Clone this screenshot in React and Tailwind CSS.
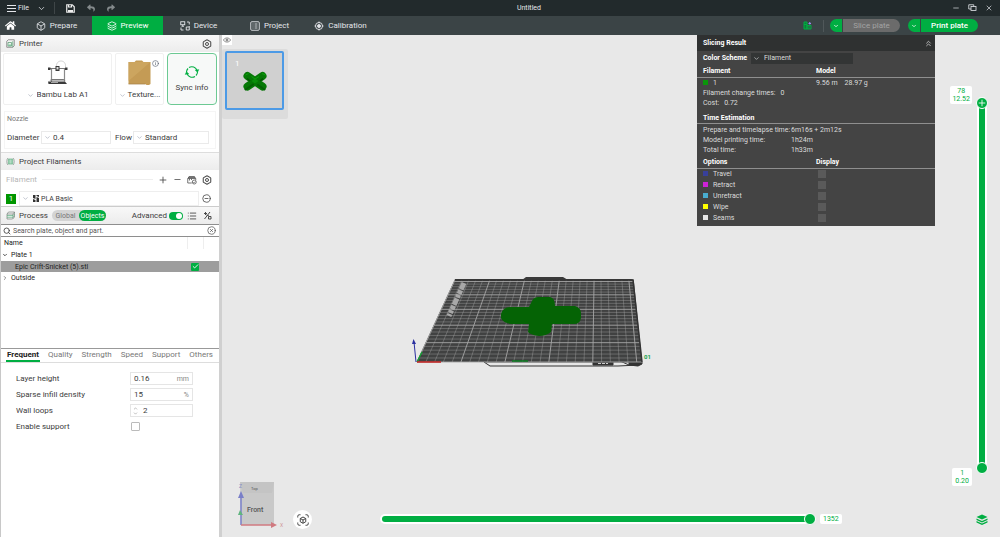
import React, { useState } from "react";
import {
  Box,
  Check,
  ChevronDown,
  ChevronRight,
  ChevronsUp,
  ChevronUp,
  CircleMinus,
  CircleX,
  Hexagon,
  Info,
  Layers,
  List,
  Minus,
  Plus,
  Search,
  X,
} from "lucide-react";
import { FaHome, FaReply, FaShare } from "react-icons/fa";

const tabs = [
  { id: "prepare", label: "Prepare", icon: <Box size={10} strokeWidth={2} /> },
  { id: "preview", label: "Preview", icon: <Layers size={10} strokeWidth={2} /> },
  { id: "device", label: "Device", icon: <DeviceIcon /> },
  { id: "project", label: "Project", icon: <ProjectIcon /> },
  { id: "calibration", label: "Calibration", icon: <TargetIcon /> },
];

const paramTabs = ["Frequent", "Quality", "Strength", "Speed", "Support", "Others"];

const lineTypes = [
  { label: "Travel", color: "bg-[#38409a]" },
  { label: "Retract", color: "bg-[#cd22d6]" },
  { label: "Unretract", color: "bg-[#49add0]" },
  { label: "Wipe", color: "bg-[#ffff00]" },
  { label: "Seams", color: "bg-[#e6e6e6]" },
];

function DeviceIcon() {
  return (
    <svg width="10" height="10" viewBox="0 0 20 20" fill="none" stroke="currentColor" strokeWidth="1.8">
      <rect x="1.5" y="1.5" width="8" height="6" />
      <path d="M5.5 7.5v3M3 10.5h5M14 2h4.5v5M18.5 10v8h-6v-6h6M2 13v5h5" />
    </svg>
  );
}

function ProjectIcon() {
  return (
    <svg width="10" height="10" viewBox="0 0 20 20" fill="none" stroke="currentColor" strokeWidth="1.8">
      <rect x="1.5" y="1.5" width="17" height="17" rx="2" />
      <path d="M5 6h2M9 6h6M5 10h2M9 10h6M5 14h2M9 14h6" />
    </svg>
  );
}

function TargetIcon() {
  return (
    <svg width="10" height="10" viewBox="0 0 20 20" fill="none" stroke="currentColor" strokeWidth="1.8">
      <circle cx="10" cy="10" r="7" />
      <circle cx="10" cy="10" r="3" fill="currentColor" />
      <path d="M10 1v3M10 16v3M1 10h3M16 10h3" />
    </svg>
  );
}

function SettingsIcon() {
  return (
    <span className="relative flex text-[#4a4a4a]">
      <Hexagon size={10} strokeWidth={2.5} />
      <svg className="absolute inset-0" width="10" height="10" viewBox="0 0 20 20" fill="none" stroke="currentColor" strokeWidth="2">
        <circle cx="10" cy="10" r="3" />
      </svg>
    </span>
  );
}

function PrinterSectionIcon() {
  return (
    <svg width="9" height="9" viewBox="0 0 18 18" fill="none" strokeWidth="1.4">
      <path d="M4.5 1.5h12v12l-3 3h-12v-12z" stroke="#6b6b6b" />
      <path d="M13.5 4.5v12M4 7h7v7H4z" stroke="#4f9a6c" />
      <path d="M5 11h5v3H5z" fill="#7cc69a" />
    </svg>
  );
}

function SpoolIcon() {
  return (
    <svg width="9" height="9" viewBox="0 0 18 18" fill="none" strokeWidth="1.3">
      <path d="M4 2C1 4 1 14 4 16M14 2c3 2 3 12 0 14" stroke="#6b7a72" />
      <path d="M5 4h8v10H5zM7.5 4v10M10.5 4v10" stroke="#5cae80" fill="#d9efe2" />
    </svg>
  );
}

function ProcessIcon() {
  return (
    <svg width="9" height="9" viewBox="0 0 18 18" fill="none" strokeWidth="1.3">
      <path d="M5 2h12l-3 4H2zM2 6v10h11l4-4V2M14 6v9" stroke="#6f7a74" />
      <path d="M2 9h12l3-3M2 12.5h12l3-3" stroke="#4fae78" />
    </svg>
  );
}

function PrinterPicture() {
  return (
    <svg width="22" height="26" viewBox="0 0 44 52" fill="none">
      <path d="M19 14c-2-16 20-16 18 0" stroke="#b5b5b5" strokeWidth="1.2" />
      <path d="M9 16v28M35 16v27" stroke="#8a8a8a" strokeWidth="2.4" />
      <path d="M5 17h34" stroke="#777" strokeWidth="2" />
      <path d="M2 15h5v5H2zM36 15h5v5h-5zM17 12h8v10h-8z" fill="#3a3a3a" />
      <path d="M19 14h4v5h-4z" fill="#ddd" />
      <path d="M9 38h24l4 3H5z" fill="#777" />
      <path d="M2 43h34l4 5H3z" fill="#3a3a3a" />
      <path d="M8 45h14" stroke="#ccc" strokeWidth="1.5" />
    </svg>
  );
}

function PlatePicture() {
  return (
    <svg width="23" height="26" viewBox="0 0 46 52">
      <path d="M1 4h12l3-3h12l3 3h14v44l-3 2h-5l-2-2H1z" fill="#c49b55" />
      <path d="M1 4h44L1 42z" fill="#d0aa64" opacity="0.7" />
      <path d="M1 48h34" stroke="#a5824a" strokeWidth="1.5" />
    </svg>
  );
}

function SyncIcon() {
  return (
    <svg width="16" height="14" viewBox="0 0 32 28" fill="none" stroke="#00ae42" strokeWidth="2.2">
      <path d="M10 5A11 11 0 0 1 26 11M22 23A11 11 0 0 1 6 17" />
      <path d="M5 14A11 11 0 0 1 8 7M27 14A11 11 0 0 1 24 21" />
      <path d="M22 10l8-1-3 6zM10 18l-8 1 3-6z" fill="#00ae42" strokeWidth="0.5" />
    </svg>
  );
}

function AmsIcon() {
  return (
    <svg width="10" height="10" viewBox="0 0 20 20" fill="none" stroke="#5a5a5a" strokeWidth="1.7">
      <path d="M2 7l2-4h11l2 4M1.5 7h16v3M1.5 7v9h8M2 5h14M5 7v4M9 7v3" />
      <circle cx="14.5" cy="14" r="4" />
      <path d="M12.5 14l1.5 1.5 2.5-2.5" />
    </svg>
  );
}

function CompareIcon() {
  return (
    <svg width="9" height="9" viewBox="0 0 18 18" fill="none" stroke="#4a4a4a" strokeWidth="2">
      <path d="M3 16L14 2M2 5h6M5 2v6M11 11h5v5h-5zM7 8l5 2" />
    </svg>
  );
}

function EyeIcon() {
  return (
    <svg width="8" height="8" viewBox="0 0 16 16" fill="none" stroke="currentColor" strokeWidth="1.4">
      <path d="M6 4C3 5 1 7 1 8s2 3 5 4M10 4c3 1 5 3 5 4s-2 3-5 4M8 2v12" />
      <circle cx="8" cy="8" r="2" />
    </svg>
  );
}

// Select with the arrow on the left side
function LeftSelect({ label, options, className, textClass = "pl-3.5", dark = false }) {
  return (
    <div className={`relative flex items-center ${className}`}>
      <ChevronDown size={7} strokeWidth={2} className={`absolute left-0.5 ${dark ? "text-gray-200" : "text-gray-400"}`} />
      <select
        aria-label={label}
        className={`size-full appearance-none bg-transparent outline-none ${textClass}`}
      >
        {options.map((option) => (
          <option key={option}>{option}</option>
        ))}
      </select>
    </div>
  );
}

function SectionHeader({ icon, title, children }) {
  return (
    <div className="flex h-[17px] items-center bg-gradient-to-b from-[#f8f8f8] to-[#ececec] pr-[7px] pl-[5px]">
      {icon}
      <h2 className="ml-1">{title}</h2>
      {children}
    </div>
  );
}

function TitleBar() {
  return (
    <header className="relative flex h-4 items-center bg-[#222a2c] text-[7px] text-gray-200">
      <button className="ml-[7px] flex items-center gap-0.5">
        <svg width="9" height="9" viewBox="0 0 9 9" stroke="currentColor">
          <path d="M0 1.5h9M0 4.5h9M0 7.5h9" />
        </svg>
        File
      </button>
      <button className="ml-2" aria-label="File menu">
        <ChevronDown size={9} />
      </button>
      <span className="ml-2 h-3 w-px bg-[#3f4648]" />
      <button className="ml-[11px]" aria-label="Save">
        <svg width="9" height="9" viewBox="0 0 18 18" fill="none" stroke="#eee" strokeWidth="2.4">
          <path d="M1.5 1.5h11l4 4v11h-15z" />
          <path d="M5 2v4h6V2" />
          <path d="M4 12h10v4H4z" fill="#eee" stroke="none" />
        </svg>
      </button>
      <button className="ml-3 text-[#848a8c]" aria-label="Undo">
        <FaReply size={8} />
      </button>
      <button className="ml-3 text-[#848a8c]" aria-label="Redo">
        <FaShare size={8} />
      </button>
      <h1 className="pointer-events-none absolute inset-x-0 pl-[58px] text-center">Untitled</h1>
      <div className="mr-[7px] ml-auto flex items-center gap-2">
        <button aria-label="Minimize"><Minus size={8} /></button>
        <button aria-label="Restore">
          <svg width="9" height="8" viewBox="0 0 18 16" fill="none" stroke="currentColor" strokeWidth="1.6">
            <path d="M6 10H1.5V1.5h10V5" />
            <rect x="6" y="5" width="10" height="8" />
          </svg>
        </button>
        <button aria-label="Close"><X size={8} /></button>
      </div>
    </header>
  );
}

function PlateAction({ label, disabled }) {
  return (
    <div className="flex h-[13px] gap-px overflow-hidden rounded-full">
      <button aria-label={`${label} options`} className="flex w-3 items-center justify-center bg-[#00ae42] text-white">
        <ChevronDown size={6} strokeWidth={3} />
      </button>
      <button
        disabled={disabled}
        className={`w-[57px] ${disabled ? "bg-[#6b6b6b] text-[#a3a3a3]" : "bg-[#00ae42] font-medium text-white"}`}
      >
        {label}
      </button>
    </div>
  );
}

function NavBar() {
  const [active, setActive] = useState("preview");
  return (
    <nav className="flex h-[19px] items-center bg-[#3b4446] text-[8px] text-gray-200">
      <button className="flex w-[21px] justify-center text-white" aria-label="Home">
        <FaHome size={11} />
      </button>
      {tabs.map((tab) => (
        <button
          key={tab.id}
          onClick={() => setActive(tab.id)}
          className={`flex h-full w-[71px] items-center justify-center gap-1 ${
            active === tab.id ? "bg-[#00ae42] text-white" : ""
          }`}
        >
          {tab.icon}
          {tab.label}
        </button>
      ))}
      <div className="mr-[22px] ml-auto flex items-center">
        <button aria-label="Statistics" className="mr-[11px]">
          <svg width="9" height="9" viewBox="0 0 18 18" fill="none" stroke="#00ae42" strokeWidth="2">
            <path d="M2 2h6v14H2z" fill="#0c7d38" />
            <path d="M8 9h8v7H8zM12 9v7M2 7h6" />
            <path d="M11 5h5M13.5 2v5" stroke="#9a8cf0" />
          </svg>
        </button>
        <span className="mr-1.5 h-3 w-px bg-[#50585a]" />
        <div className="flex gap-2">
          <PlateAction label="Slice plate" disabled />
          <PlateAction label="Print plate" />
        </div>
      </div>
    </nav>
  );
}

function PrinterSection() {
  return (
    <section>
      <SectionHeader icon={<PrinterSectionIcon />} title="Printer">
        <button className="ml-auto" aria-label="Printer settings"><SettingsIcon /></button>
      </SectionHeader>
      <div className="flex h-[55px] gap-[3px] px-0.5 pt-px pb-0.5">
        <div className="flex flex-1 flex-col items-center justify-end rounded-xs border border-[#f0f0f0] pb-[3px]">
          <PrinterPicture />
          <LeftSelect label="Printer" options={["Bambu Lab A1"]} className="mt-[3px] h-3 w-[66px]" textClass="pl-3" />
        </div>
        <div className="relative flex w-[49px] flex-col items-center justify-end rounded-xs border border-[#f0f0f0] pb-[3px]">
          <PlatePicture />
          <Info size={7} className="absolute top-1.5 right-1 text-gray-600" />
          <button className="mt-[3px] flex h-3 items-center gap-0.5">
            <ChevronDown size={7} className="text-gray-400" />
            Texture...
          </button>
        </div>
        <button className="flex w-[50px] flex-col items-center justify-center gap-1 rounded-sm border border-[#6cc993] bg-[#f7f9f8]">
          <SyncIcon />
          Sync info
        </button>
      </div>
      <div className="mx-[3px] mt-1 mb-[3px] border border-[#f5f5f5] px-0.5 pt-0.5 pb-1">
        <h3 className="mb-[7px] text-[7px] text-[#777]">Nozzle</h3>
        <div className="flex items-center">
          <span className="w-[34px]">Diameter</span>
          <LeftSelect label="Diameter" options={["0.4", "0.2", "0.6", "0.8"]} className="h-[13px] w-[70px] border border-[#eaeaea]" textClass="pl-[11px]" />
          <span className="ml-1 w-[18px]">Flow</span>
          <LeftSelect label="Flow" options={["Standard", "High Flow"]} className="mr-1 h-[13px] flex-1 border border-[#eaeaea]" textClass="pl-[11px]" />
        </div>
      </div>
    </section>
  );
}

function FilamentSection() {
  return (
    <section>
      <div className="border-t border-[#ddd]">
        <SectionHeader icon={<SpoolIcon />} title="Project Filaments" />
      </div>
      <div className="flex h-[19px] items-center gap-[5px] pr-[7px] pl-[5px] text-[#444]">
        <span className="text-[#b5b5b5]">Filament</span>
        <span className="h-px flex-1 bg-[#eee]" />
        <button aria-label="Add filament"><Plus size={10} /></button>
        <button aria-label="Remove filament"><Minus size={9} /></button>
        <button aria-label="Sync filaments"><AmsIcon /></button>
        <button aria-label="Filament settings"><SettingsIcon /></button>
      </div>
      <div className="flex items-center pt-0.5 pr-2 pl-[5px]">
        <button className="size-[10px] bg-[#009600] text-[8px] leading-[10px] text-white">1</button>
        <div className="relative ml-[3px] flex flex-1 items-center">
          <svg className="absolute left-[14px]" width="6" height="7" viewBox="0 0 12 14" fill="#333">
            <path d="M0 0h5v8l-5-2zM7 0h5v4L7 2zM0 8l5 2v4H0zM7 4l5 2v8H7z" />
          </svg>
          <LeftSelect label="Filament 1" options={["PLA Basic", "PLA Matte", "PETG HF"]} className="h-[15px] w-full border border-[#eee] text-[7px]" textClass="pl-[21px]" />
        </div>
        <button className="ml-[3px]" aria-label="More"><CircleMinus size={9} strokeWidth={2} /></button>
      </div>
    </section>
  );
}

function ProcessSection() {
  const [mode, setMode] = useState("Objects");
  return (
    <section>
      <div className="border-t border-[#ccc]">
        <SectionHeader icon={<ProcessIcon />} title="Process">
          <div className="ml-1 flex h-[11px] rounded-full bg-[#d4d4d4]">
            {["Global", "Objects"].map((name) => (
              <button
                key={name}
                onClick={() => setMode(name)}
                className={`w-[27px] rounded-full text-[7px] ${mode === name ? "bg-[#00ae42] text-white" : "text-[#777]"}`}
              >
                {name}
              </button>
            ))}
          </div>
          <label className="ml-auto flex items-center gap-0.5">
            Advanced
            <input type="checkbox" defaultChecked className="peer sr-only" />
            <span className="flex h-2 w-3.5 justify-start rounded-full bg-gray-300 p-px peer-checked:justify-end peer-checked:bg-[#00ae42]">
              <span className="size-1.5 rounded-full bg-white" />
            </span>
          </label>
          <button className="ml-1" aria-label="Parameter list"><List size={10} /></button>
          <button className="ml-1.5" aria-label="Compare presets"><CompareIcon /></button>
        </SectionHeader>
      </div>
      <div className="flex h-[13px] items-center border border-x-0 border-[#8e8e8e] px-0.5">
        <Search size={8} strokeWidth={2.5} />
        <input
          aria-label="Search"
          placeholder="Search plate, object and part."
          className="ml-0.5 min-w-0 flex-1 text-[7px] outline-none placeholder:text-[#555]"
        />
        <button aria-label="Clear search" className="mr-px text-[#555]"><CircleX size={9} /></button>
      </div>
      <div className="h-[112px] border-b border-[#999]">
        <table className="w-full table-fixed text-left text-[7px] text-[#222]">
          <colgroup>
            <col />
            <col className="w-4" />
            <col className="w-4" />
          </colgroup>
          <thead>
            <tr className="h-3">
              <th className="pl-[3px] font-normal">Name</th>
              <th className="border-x border-[#eee]" />
              <th />
            </tr>
          </thead>
          <tbody>
            <tr className="h-3">
              <td colSpan={3}>
                <button className="flex items-center gap-[3px] pl-px">
                  <ChevronDown size={6} strokeWidth={3} />
                  Plate 1
                </button>
              </td>
            </tr>
            <tr className="h-[11px] bg-[#9d9d9d]">
              <td className="pl-3.5">Epic Crift-Snicket (5).stl</td>
              <td>
                <label className="mx-auto flex size-2 items-center justify-center rounded-[1px] bg-[#00ae42] text-white">
                  <input type="checkbox" defaultChecked aria-label="Printable" className="sr-only" />
                  <Check size={7} strokeWidth={3} />
                </label>
              </td>
              <td />
            </tr>
            <tr className="h-3">
              <td colSpan={3}>
                <button className="flex items-center gap-[3px] pl-px">
                  <ChevronRight size={6} strokeWidth={2} />
                  Outside
                </button>
              </td>
            </tr>
          </tbody>
        </table>
      </div>
    </section>
  );
}

function Parameters() {
  const [active, setActive] = useState("Frequent");
  return (
    <section>
      <div className="flex h-[14px] justify-between border-b border-[#ddd] pr-[5px] pl-[5px]">
        {paramTabs.map((tab) => (
          <button
            key={tab}
            onClick={() => setActive(tab)}
            className={`border-b-2 px-px ${active === tab ? "border-[#00ae42] font-bold text-[#222]" : "border-transparent text-[#777]"}`}
          >
            {tab}
          </button>
        ))}
      </div>
      <div className="flex flex-col gap-[3px] px-[15px] pt-[9px]">
        <div className="flex h-[13px] items-center">
          <label htmlFor="layer" className="w-[114px]">Layer height</label>
          <div className="flex h-full w-[63px] items-center border border-[#e5e5e5] px-[3px]">
            <input id="layer" defaultValue="0.16" className="min-w-0 flex-1 outline-none" />
            <span className="text-[7px] text-[#888]">mm</span>
          </div>
        </div>
        <div className="flex h-[13px] items-center">
          <label htmlFor="infill" className="w-[114px]">Sparse infill density</label>
          <div className="flex h-full w-[63px] items-center border border-[#e5e5e5] px-[3px]">
            <input id="infill" defaultValue="15" className="min-w-0 flex-1 outline-none" />
            <span className="text-[7px] text-[#888]">%</span>
          </div>
        </div>
        <div className="flex h-[13px] items-center">
          <label htmlFor="loops" className="w-[114px]">Wall loops</label>
          <div className="flex h-full w-[63px] items-center border border-[#e5e5e5] px-0.5">
            <div className="flex flex-col text-[#999]">
              <button aria-label="Increase"><ChevronUp size={5} strokeWidth={3} /></button>
              <button aria-label="Decrease"><ChevronDown size={5} strokeWidth={3} /></button>
            </div>
            <input id="loops" defaultValue="2" className="ml-[5px] min-w-0 flex-1 outline-none" />
          </div>
        </div>
        <div className="flex h-[13px] items-center">
          <label htmlFor="support" className="w-[115px]">Enable support</label>
          <input id="support" type="checkbox" className="size-[9px] appearance-none rounded-[1px] border border-[#bbb] checked:bg-[#00ae42]" />
        </div>
      </div>
    </section>
  );
}

// Print bed in perspective: front edge 17..242, back edge 55..233
function BuildPlate() {
  const cells = 25.6;
  const columns = Array.from({ length: 26 }, (_, i) => i);
  const rowAt = (i) => {
    const v = i / cells;
    const y = 97 - (82 * v * 1.27) / (1 + 0.27 * v);
    const f = (97 - y) / 82;
    return { y, x1: 17 + 38 * f, x2: 242 - 9 * f };
  };
  return (
    <svg width="270" height="110" viewBox="0 0 270 110" className="absolute top-[230px] left-[178px]">
      <path d="M122 15l4-3h37l5 3z" fill="#3a3a3a" />
      <path d="M55 14h176q3 0 3 3l8 79q0 4-3 4l-78 0H90l-8-4H17z" fill="#4a4a4a" />
      <path d="M84 97h157l-2 3-21 1H90z" fill="#e6e6e6" stroke="#333" />
      <path d="M193 97h20v3h-20zM220 96l9 4M229 97h13v2l-4 2-9-1z" fill="#333" stroke="#333" />
      <path d="M198 98.5h10" stroke="#ccc" strokeWidth="1.2" strokeDasharray="3 1" />
      <path d="M55 15h178l9 82H17z" fill="#404141" />
      {columns.map((i) => {
        const s = i / cells;
        return (
          <line
            key={`c${i}`}
            x1={17 + 225 * s}
            y1="97"
            x2={55 + 178 * s}
            y2="15"
            stroke="#a6a6a6"
            strokeWidth={i % 5 === 0 ? 0.9 : 0.4}
          />
        );
      })}
      {columns.map((i) => {
        const row = rowAt(i);
        return (
          <line
            key={`r${i}`}
            x1={row.x1}
            y1={row.y}
            x2={row.x2}
            y2={row.y}
            stroke="#a6a6a6"
            strokeWidth={i % 5 === 0 ? 0.9 : 0.4}
          />
        );
      })}
      <path d="M55 15h178l9 82" fill="none" stroke="#333" strokeWidth="1.5" />
      <path d="M64 18L49 51" stroke="#a8a8a8" strokeWidth="5" strokeDasharray="7 1 4 1 3 1" />
      <path
        d="M131 38q2-6 7-6h12q5 1 5 9h20q6 2 6 7v5q-1 6-7 6h-22l-1 8q-5 4-12 4-8-1-11-4l1-8h-18q-8-1-10-6v-4q2-7 9-7h19z"
        fill="#056305"
      />
      <path d="M112 96h16" stroke="#0a7d20" strokeWidth="1.5" />
      <path d="M17 97l5-10" stroke="#0aa32e" strokeWidth="1.2" />
      <path d="M17 97h24" stroke="#c4201f" strokeWidth="1.5" />
      <path d="M16 97l-2-20" stroke="#2a2fa0" />
      <path d="M12 79l1.5-5 2.5 5z" fill="#2a2fa0" />
      <text x="244" y="94" fontSize="6" fontWeight="700" fill="#16a34a">01</text>
    </svg>
  );
}

function PlateThumbnail() {
  return (
    <div className="absolute top-[14px] left-0 rounded-xs bg-[#dcdcdc] pt-[2px] pr-1 pb-[9px] pl-[3px]">
      <button aria-label="Plate 1" className="relative flex size-[59px] items-center justify-center rounded-xs border-2 border-[#4c9ae6] bg-[#d0d0d0]">
        <span className="absolute top-1.5 left-2 text-[8px] text-white">1</span>
        <svg width="26" height="22" viewBox="0 0 52 44" className="mt-px">
          <path d="M11 12L41 33M41 12L11 33" stroke="#067806" strokeWidth="16" strokeLinecap="round" />
          <path d="M7 39L22 29M45 39L32 30" stroke="#056005" strokeWidth="4" strokeLinecap="round" />
          <path d="M19 13l7 5 8-5M7 10l6-3M40 7l7 3" stroke="#0ba30b" strokeWidth="2" fill="none" />
          <path d="M26 17l7 5-7 5-7-5z" fill="#0b8f0b" />
          <path d="M10 17l6 5M42 17l-6 5" stroke="#055505" strokeWidth="3" />
        </svg>
      </button>
    </div>
  );
}

function SlicingResult() {
  return (
    <aside className="absolute top-0 right-[65px] w-[238px] bg-[#444444] pb-[3px] text-[7px] leading-[10px] text-[#dcdcdc]">
      <div className="flex h-4 items-center justify-between bg-[#2f3131] pr-0.5 pl-1.5">
        <h2 className="font-bold text-white">Slicing Result</h2>
        <button aria-label="Collapse"><ChevronsUp size={9} /></button>
      </div>
      <div className="flex h-[14px] items-center gap-[3px] pl-1.5">
        <span className="w-[45px] font-bold text-white">Color Scheme</span>
        <LeftSelect label="Color Scheme" options={["Filament", "Line Type", "Speed"]} className="h-[11px] w-[102px] bg-[#333535]" textClass="pl-[13px]" dark />
      </div>
      <table className="w-full text-left">
        <thead className="text-white">
          <tr className="h-3 border-b border-[#8f8f8f]">
            <th className="w-[119px] pl-1.5">Filament</th>
            <th>Model</th>
          </tr>
        </thead>
        <tbody>
          <tr className="h-[11px]">
            <td className="pl-1.5">
              <span className="mr-[5px] inline-block size-[5px] bg-[#0a960a]" />1
            </td>
            <td>
              9.56 m<span className="ml-[7px]">28.97 g</span>
            </td>
          </tr>
        </tbody>
      </table>
      <div className="pl-1.5">
        <p>Filament change times:<span className="ml-[5px]">0</span></p>
        <p>Cost:<span className="ml-[5px]">0.72</span></p>
      </div>
      <h3 className="mt-[5px] h-[11px] border-b border-[#8f8f8f] pl-1.5 font-bold text-white">Time Estimation</h3>
      <dl className="grid grid-cols-[88px_1fr] pt-px pl-1.5">
        <dt>Prepare and timelapse time:</dt>
        <dd>6m16s + 2m12s</dd>
        <dt>Model printing time:</dt>
        <dd>1h24m</dd>
        <dt>Total time:</dt>
        <dd>1h33m</dd>
      </dl>
      <table className="mt-px w-full text-left">
        <thead className="text-white">
          <tr className="h-3 border-b border-[#8f8f8f]">
            <th className="w-[119px] pl-1.5">Options</th>
            <th>Display</th>
          </tr>
        </thead>
        <tbody>
          {lineTypes.map((type) => (
            <tr key={type.label} className="h-[11px]">
              <td className="pl-1.5">
                <span className={`mr-[5px] inline-block size-[5px] ${type.color}`} />
                {type.label}
              </td>
              <td className="pl-0.5">
                <input type="checkbox" aria-label={type.label} className="block size-2 appearance-none bg-[#5a5a5a] checked:bg-[#00ae42]" />
              </td>
            </tr>
          ))}
        </tbody>
      </table>
    </aside>
  );
}

function ViewCube() {
  return (
    <svg width="52" height="50" viewBox="0 0 52 50" className="absolute bottom-[7px] left-[14px]">
      <path d="M4 2h34v43H5z" fill="#c9c9c9" />
      <path d="M4 2h34l-2 11H7z" fill="#c4c4c4" />
      <text x="15" y="10" fontSize="4" fill="#555">Top</text>
      <text x="11" y="32" fontSize="7" fontWeight="500" fill="#555">Front</text>
      <path d="M5 45V14" stroke="#7a7fc8" strokeWidth="1.5" />
      <path d="M2 18l3-7 3 7z" fill="#7a7fc8" />
      <path d="M2 35l2-5 3 5z" fill="#5fb47e" />
      <path d="M5 45h31" stroke="#d07a80" strokeWidth="1.5" />
      <path d="M35 42l6 3-6 3z" fill="#d07a80" />
      <text x="3" y="8" fontSize="5" fill="#8a8ec4">Z</text>
      <text x="44" y="47" fontSize="5" fill="#cf9599">X</text>
    </svg>
  );
}

function LayerSlider() {
  const thumb =
    "pointer-events-none absolute inset-0 size-full appearance-none bg-transparent [direction:rtl] [writing-mode:vertical-lr] [&::-webkit-slider-thumb]:pointer-events-auto [&::-webkit-slider-thumb]:size-3 [&::-webkit-slider-thumb]:appearance-none [&::-webkit-slider-thumb]:rounded-full [&::-webkit-slider-thumb]:border [&::-webkit-slider-thumb]:border-white [&::-webkit-slider-thumb]:bg-[#00ae42]";
  return (
    <div className="absolute top-[62px] right-3 bottom-[63px] w-3 text-[7px] leading-[8px] text-[#00ae42]">
      <div className="mx-px h-full rounded-full bg-white px-0.5 py-1">
        <div className="h-full bg-[#00ae42]" />
      </div>
      <input type="range" aria-label="Top layer" min="1" max="78" defaultValue="78" className={thumb} />
      <input type="range" aria-label="Bottom layer" min="1" max="78" defaultValue="1" className={thumb} />
      <Plus size={10} className="pointer-events-none absolute top-px left-px text-white" />
      <output className="absolute -top-[11px] right-4 rounded-xs bg-white px-0.5 py-px text-center">
        78<br />12.52
      </output>
      <output className="absolute right-4 -bottom-3 rounded-xs bg-white px-[3px] py-px text-center">
        1<br />0.20
      </output>
    </div>
  );
}

function MoveSlider() {
  return (
    <div className="absolute right-[184px] bottom-3 left-[158px] h-3">
      <div className="h-full py-px">
        <div className="h-full rounded-full bg-white p-0.5">
          <div className="h-full rounded-full bg-[#00ae42]" />
        </div>
      </div>
      <input
        type="range"
        aria-label="Move"
        max="1352"
        defaultValue="1352"
        className="absolute inset-0 size-full appearance-none bg-transparent [&::-webkit-slider-thumb]:size-3 [&::-webkit-slider-thumb]:appearance-none [&::-webkit-slider-thumb]:rounded-full [&::-webkit-slider-thumb]:border [&::-webkit-slider-thumb]:border-white [&::-webkit-slider-thumb]:bg-[#00ae42]"
      />
      <output className="absolute top-px left-full ml-1 rounded-xs bg-white px-[3px] text-[7px] leading-[10px] text-[#00ae42]">
        1352
      </output>
    </div>
  );
}

function Viewport() {
  return (
    <main className="relative flex-1 overflow-hidden bg-[#e8e8e8]">
      <button aria-label="Toggle sidebar" className="flex size-[10px] items-center justify-center bg-white text-[#666]">
        <EyeIcon />
      </button>
      <PlateThumbnail />
      <BuildPlate />
      <SlicingResult />
      <ViewCube />
      <button aria-label="Fit camera" className="absolute bottom-2 left-[71px] flex size-[19px] items-center justify-center rounded-full bg-white text-[#444]">
        <svg width="12" height="12" viewBox="0 0 24 24" fill="none" stroke="currentColor" strokeWidth="2">
          <path d="M1.5 7V4.5a3 3 0 0 1 3-3H7M17 1.5h2.5a3 3 0 0 1 3 3V7M22.5 17v2.5a3 3 0 0 1-3 3H17M7 22.5H4.5a3 3 0 0 1-3-3V17" />
          <path d="M12 6l5.5 3v6.5L12 18.5l-5.5-3V9zM6.5 9l5.5 3 5.5-3M12 12v6.5" />
        </svg>
      </button>
      <MoveSlider />
      <LayerSlider />
      <button aria-label="Layers" className="absolute right-3 bottom-3 text-[#00ae42]">
        <svg width="12" height="11" viewBox="0 0 24 22" fill="currentColor">
          <path d="M12 1l11 5-11 5L1 6z" />
          <path d="M1 9l11 5 11-5v3l-11 5-11-5zM1 14l11 5 11-5v3l-11 5-11-5z" />
        </svg>
      </button>
    </main>
  );
}

export default function App() {
  return (
    <div className="flex min-h-screen flex-col font-[Roboto,sans-serif] text-[8px] leading-[10px] text-[#3c3c3c]">
      <TitleBar />
      <NavBar />
      <div className="flex flex-1">
        <aside className="w-[222px] shrink-0 border-r-[3px] border-l border-r-[#d0d0d0] border-l-[#c8c8c8] bg-white">
          <PrinterSection />
          <FilamentSection />
          <ProcessSection />
          <Parameters />
        </aside>
        <Viewport />
      </div>
    </div>
  );
}
